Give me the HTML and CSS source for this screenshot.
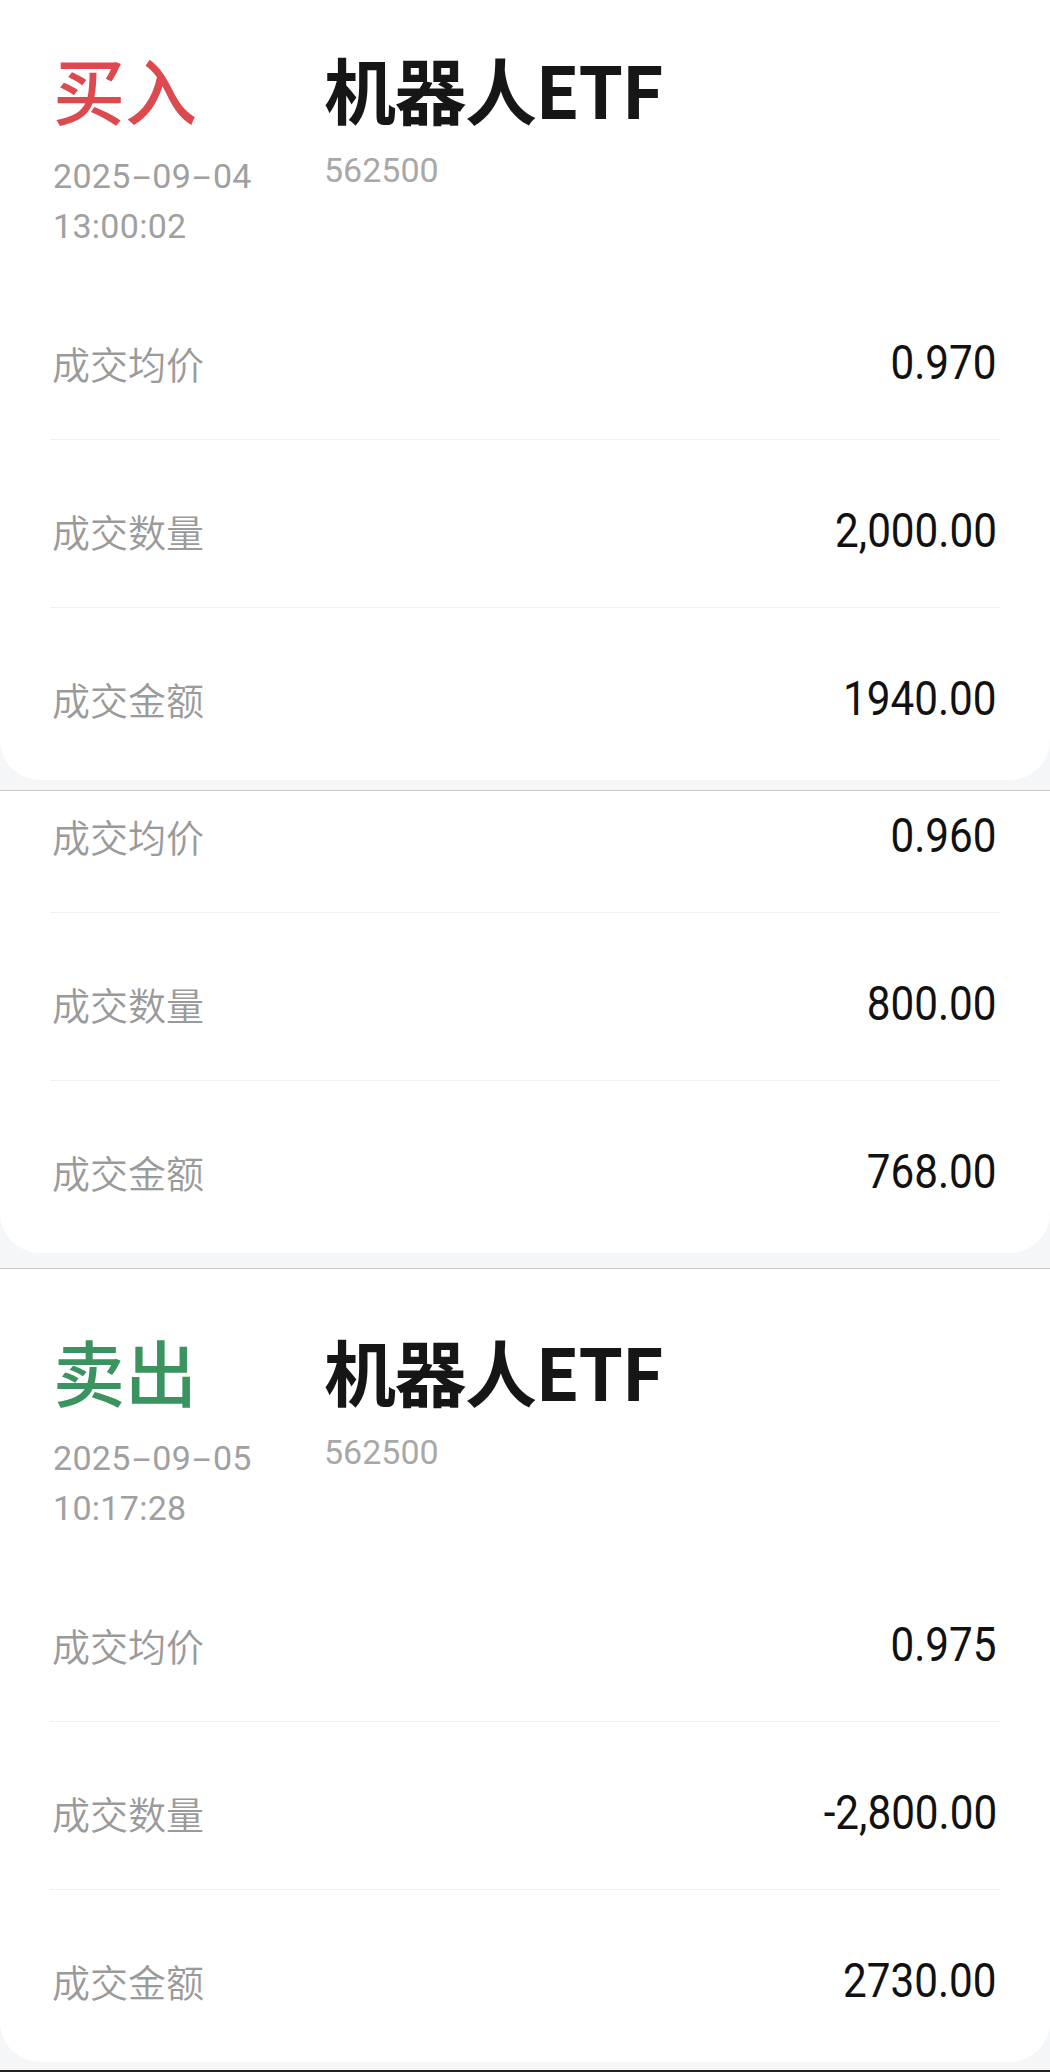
FILE: index.html
```html
<!DOCTYPE html>
<html lang="zh-CN">
<head>
<meta charset="utf-8">
<title>成交记录</title>
<link rel="stylesheet" href="styles.css">
</head>
<body>
<div class="page">
  <section class="card card-first">
    <div class="head">
      <div class="side">
        <div class="type buy">买入</div>
        <div class="time">2025<span class="dash">-</span>09<span class="dash">-</span>04<br>13:00:02</div>
      </div>
      <div class="info">
        <div class="name">机器人ETF</div>
        <div class="code">562500</div>
      </div>
    </div>
    <div class="row"><span class="label">成交均价</span><span class="value">0.970</span></div>
    <div class="row"><span class="label">成交数量</span><span class="value">2,000.00</span></div>
    <div class="row"><span class="label">成交金额</span><span class="value">1940.00</span></div>
  </section>
  <div class="seam seam-1"></div>
  <section class="card card-cut">
    <div class="row"><span class="label">成交均价</span><span class="value">0.960</span></div>
    <div class="row"><span class="label">成交数量</span><span class="value">800.00</span></div>
    <div class="row"><span class="label">成交金额</span><span class="value">768.00</span></div>
  </section>
  <div class="seam seam-2"></div>
  <section class="card card-last">
    <div class="head">
      <div class="side">
        <div class="type sell">卖出</div>
        <div class="time">2025<span class="dash">-</span>09<span class="dash">-</span>05<br>10:17:28</div>
      </div>
      <div class="info">
        <div class="name">机器人ETF</div>
        <div class="code">562500</div>
      </div>
    </div>
    <div class="row"><span class="label">成交均价</span><span class="value">0.975</span></div>
    <div class="row"><span class="label">成交数量</span><span class="value">-2,800.00</span></div>
    <div class="row"><span class="label">成交金额</span><span class="value">2730.00</span></div>
  </section>
  <div class="bottom-bar"></div>
</div>
</body>
</html>
```
FILE: styles.css
```css
html, body {
  margin: 0;
  padding: 0;
}
body {
  background: #f5f6f8;
  font-family: "Noto Sans CJK SC", "Noto Sans", sans-serif;
  color: #1a1a1a;
}
.page {
  width: 1050px;
  display: flex;
  flex-direction: column;
}
.card {
  background: #ffffff;
  border-radius: 0 0 40px 40px;
  padding: 0 50px 5px;
}
.head {
  display: flex;
  padding: 52px 0 21px 3px;
}
.card-last .head {
  padding-top: 65px;
}
.side {
  width: 271px;
  flex: none;
}
.type {
  font-size: 72px;
  line-height: 72px;
  font-weight: 500;
}
.buy { color: #dc4a4f; }
.sell { color: #3b9460; }
.time {
  margin-top: 27px;
  font-family: Roboto, "Noto Sans", sans-serif;
  font-size: 34px;
  line-height: 50px;
  color: #a0a0a0;
  letter-spacing: 0.3px;
}
.dash {
  display: inline-block;
  transform: scaleX(1.9);
  margin: 0 6px;
}
.name {
  font-size: 72px;
  line-height: 72px;
  font-weight: 700;
  color: #161616;
  letter-spacing: -1.5px;
}
.code {
  margin-top: 21px;
  font-family: Roboto, "Noto Sans", sans-serif;
  font-size: 34px;
  line-height: 50px;
  color: #a8a8a8;
}
.row {
  display: flex;
  justify-content: space-between;
  align-items: center;
  padding: 71px 0 56px 2px;
  border-bottom: 1px solid #f0f0f0;
}
.row:last-child {
  border-bottom: none;
}
.card-cut .row:first-child {
  padding-top: 25px;
}
.label {
  font-size: 38px;
  line-height: 40px;
  color: #9a9a9a;
  font-weight: 350;
}
.value {
  display: inline-block;
  font-family: Roboto, "Noto Sans", sans-serif;
  font-size: 48px;
  line-height: 40px;
  color: #111111;
  transform: scaleX(0.88);
  transform-origin: right center;
  margin-right: 3px;
}
.seam {
  border-bottom: 1px solid #c9c9cb;
}
.seam-1 { height: 10px; }
.seam-2 { height: 15px; }
.bottom-bar {
  margin-top: 8px;
  height: 2px;
  background: #222222;
}
```
